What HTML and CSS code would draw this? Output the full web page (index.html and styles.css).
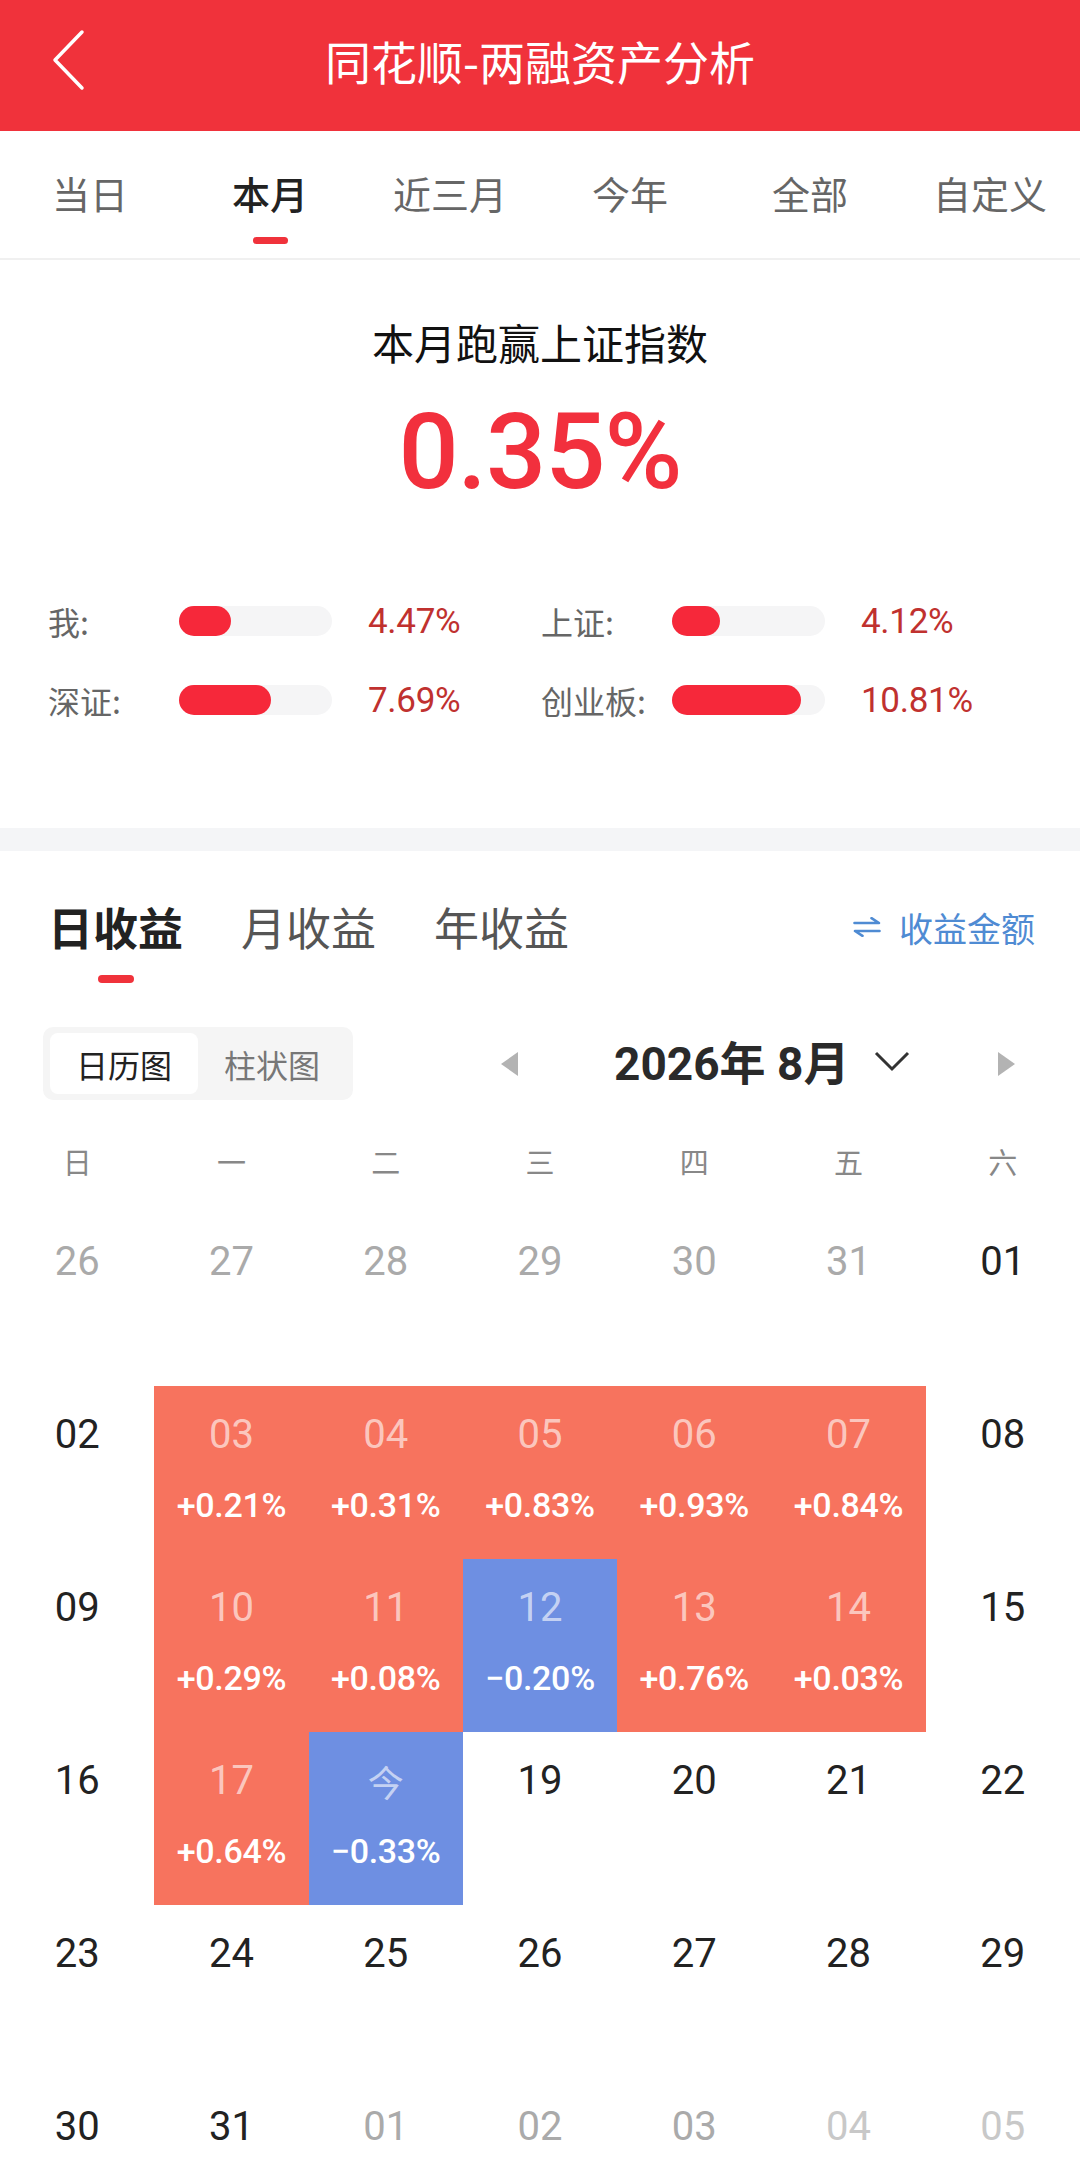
FILE: index.html
```html
<!DOCTYPE html>
<html lang="zh-CN">
<head>
<meta charset="utf-8">
<title>同花顺-两融资产分析</title>
<link rel="stylesheet" href="styles.css">
</head>
<body>
<div class="page">
  <header class="header">
    <svg class="back" width="40" height="64" viewBox="0 0 40 64"><polyline points="32,4 5,32 32,60" fill="none" stroke="#fff" stroke-width="3.5" stroke-linecap="round" stroke-linejoin="round"/></svg>
    <div class="title">同花顺-两融资产分析</div>
    <div></div>
  </header>

  <nav class="tabs">
    <div class="tab"><span>当日</span></div>
    <div class="tab active"><span>本月</span><i class="bar"></i></div>
    <div class="tab"><span>近三月</span></div>
    <div class="tab"><span>今年</span></div>
    <div class="tab"><span>全部</span></div>
    <div class="tab"><span>自定义</span></div>
  </nav>

  <section class="summary">
    <div class="sum-title">本月跑赢上证指数</div>
    <div class="sum-value">0.35%</div>
    <div class="compare">
      <div class="cmp"><span class="cmp-label">我:</span><span class="track"><span class="fill" style="width:52px"></span></span><span class="cmp-val">4.47%</span></div>
      <div class="cmp"><span class="cmp-label">上证:</span><span class="track"><span class="fill" style="width:48px"></span></span><span class="cmp-val">4.12%</span></div>
      <div class="cmp"><span class="cmp-label">深证:</span><span class="track"><span class="fill" style="width:92px"></span></span><span class="cmp-val">7.69%</span></div>
      <div class="cmp"><span class="cmp-label">创业板:</span><span class="track"><span class="fill" style="width:129px"></span></span><span class="cmp-val">10.81%</span></div>
    </div>
  </section>

  <div class="band"></div>

  <section class="profit">
    <div class="ptabs">
      <div class="ptab active"><span>日收益</span><i class="pbar"></i></div>
      <div class="ptab"><span>月收益</span></div>
      <div class="ptab"><span>年收益</span></div>
      <div class="switch">
        <svg width="28" height="20" viewBox="0 0 28 20"><path d="M1.5 6H26L18.5 1.2M26.5 14H2L9.5 18.8" fill="none" stroke="#4f8bd3" stroke-width="2.6" stroke-linecap="round" stroke-linejoin="round"/></svg>
        <span>收益金额</span>
      </div>
    </div>

    <div class="controls">
      <div class="seg">
        <div class="seg-item on">日历图</div>
        <div class="seg-item">柱状图</div>
      </div>
      <div class="monthnav">
        <svg class="tri-l" width="17" height="24" viewBox="0 0 17 24"><polygon points="17,0 0,12 17,24" fill="#b3b3b3"/></svg>
        <span class="month">2026年 8月</span>
        <svg class="down" width="36" height="22" viewBox="0 0 36 22"><polyline points="2,3 18,19 34,3" fill="none" stroke="#333" stroke-width="3"/></svg>
        <svg class="tri-r" width="17" height="24" viewBox="0 0 17 24"><polygon points="0,0 17,12 0,24" fill="#b3b3b3"/></svg>
      </div>
    </div>

    <div class="weekdays">
      <span>日</span><span>一</span><span>二</span><span>三</span><span>四</span><span>五</span><span>六</span>
    </div>

    <div class="cal">
      <div class="cell other"><b>26</b></div>
      <div class="cell other"><b>27</b></div>
      <div class="cell other"><b>28</b></div>
      <div class="cell other"><b>29</b></div>
      <div class="cell other"><b>30</b></div>
      <div class="cell other"><b>31</b></div>
      <div class="cell"><b>01</b></div>

      <div class="cell"><b>02</b></div>
      <div class="cell up"><b>03</b><em>+0.21%</em></div>
      <div class="cell up"><b>04</b><em>+0.31%</em></div>
      <div class="cell up"><b>05</b><em>+0.83%</em></div>
      <div class="cell up"><b>06</b><em>+0.93%</em></div>
      <div class="cell up"><b>07</b><em>+0.84%</em></div>
      <div class="cell"><b>08</b></div>

      <div class="cell"><b>09</b></div>
      <div class="cell up"><b>10</b><em>+0.29%</em></div>
      <div class="cell up"><b>11</b><em>+0.08%</em></div>
      <div class="cell down-c"><b>12</b><em>−0.20%</em></div>
      <div class="cell up"><b>13</b><em>+0.76%</em></div>
      <div class="cell up"><b>14</b><em>+0.03%</em></div>
      <div class="cell"><b>15</b></div>

      <div class="cell"><b>16</b></div>
      <div class="cell up"><b>17</b><em>+0.64%</em></div>
      <div class="cell down-c"><b class="cjk">今</b><em>−0.33%</em></div>
      <div class="cell"><b>19</b></div>
      <div class="cell"><b>20</b></div>
      <div class="cell"><b>21</b></div>
      <div class="cell"><b>22</b></div>

      <div class="cell"><b>23</b></div>
      <div class="cell"><b>24</b></div>
      <div class="cell"><b>25</b></div>
      <div class="cell"><b>26</b></div>
      <div class="cell"><b>27</b></div>
      <div class="cell"><b>28</b></div>
      <div class="cell"><b>29</b></div>

      <div class="cell"><b>30</b></div>
      <div class="cell"><b>31</b></div>
      <div class="cell other"><b>01</b></div>
      <div class="cell other"><b>02</b></div>
      <div class="cell other"><b>03</b></div>
      <div class="cell other faint"><b>04</b></div>
      <div class="cell other faint"><b>05</b></div>
    </div>
  </section>
</div>
</body>
</html>
```

FILE: styles.css
```css
* { box-sizing: border-box; margin: 0; padding: 0; }
html, body { background: #fff; }
body {
  width: 1080px;
  height: 2160px;
  overflow: hidden;
  font-family: Roboto, "Noto Sans CJK SC", sans-serif;
  color: #222;
}
.page { width: 1080px; }

/* header */
.header {
  height: 131px;
  background: #f0323b;
  display: grid;
  grid-template-columns: 130px 1fr 130px;
  align-items: center;
  padding-bottom: 12px;
}
.back { margin-left: 50px; display: block; }
.title {
  text-align: center;
  color: #fff;
  font-family: "Noto Sans CJK SC", sans-serif;
  font-size: 46px;
  line-height: 60px;
  font-weight: 400;
}

/* tabs */
.tabs {
  height: 129px;
  display: grid;
  grid-template-columns: repeat(6, 1fr);
  padding-top: 37px;
  border-bottom: 2px solid #f0f0f0;
}
.tab {
  display: flex;
  flex-direction: column;
  align-items: center;
}
.tab span {
  font-family: "Noto Sans CJK SC", sans-serif;
  font-size: 38px;
  line-height: 50px;
  color: #666;
}
.tab.active span { color: #222; font-weight: 500; }
.bar {
  display: block;
  width: 35px;
  height: 7px;
  border-radius: 4px;
  background: #f0323b;
  margin-top: 19px;
}

/* summary */
.summary { padding: 52px 0 103px; }
.sum-title {
  text-align: center;
  font-family: "Noto Sans CJK SC", sans-serif;
  font-size: 42px;
  line-height: 60px;
  color: #111;
}
.sum-value {
  margin-top: 20px;
  text-align: center;
  font-family: Roboto, sans-serif;
  font-weight: 500;
  font-size: 106px;
  line-height: 120px;
  color: #f2303d;
  letter-spacing: -1px;
}
.compare {
  margin-top: 84px;
  padding-left: 48px;
  display: grid;
  grid-template-columns: 493px 493px;
  row-gap: 29px;
}
.cmp {
  display: flex;
  align-items: center;
  height: 50px;
}
.cmp-label {
  width: 131px;
  font-family: "Noto Sans CJK SC", sans-serif;
  font-size: 32px;
  color: #666;
}
.track {
  width: 153px;
  height: 30px;
  border-radius: 15px;
  background: #f5f5f6;
  display: block;
}
.fill {
  display: block;
  height: 30px;
  border-radius: 15px;
  background: #f6283a;
}
.cmp-val {
  margin-left: 36px;
  font-size: 35px;
  color: #c0312f;
  letter-spacing: -0.3px;
}

.band { height: 23px; background: #f4f5f7; }

/* profit */
.profit { padding-top: 46px; }
.ptabs {
  display: flex;
  align-items: flex-start;
  padding: 0 45px 0 48px;
  gap: 58px;
}
.ptab {
  display: flex;
  flex-direction: column;
  align-items: center;
}
.ptab span {
  font-family: "Noto Sans CJK SC", sans-serif;
  font-size: 45px;
  line-height: 60px;
  color: #555;
}
.ptab.active span { color: #222; font-weight: 700; }
.pbar {
  display: block;
  width: 36px;
  height: 8px;
  border-radius: 4px;
  background: #f0323b;
  margin-top: 18px;
}
.switch {
  margin-left: auto;
  display: flex;
  align-items: center;
  gap: 18px;
  height: 60px;
  color: #4f8bd3;
  font-family: "Noto Sans CJK SC", sans-serif;
  font-size: 34px;
}

.controls {
  margin-top: 44px;
  display: flex;
  align-items: center;
  padding-left: 43px;
}
.seg {
  display: flex;
  width: 310px;
  height: 73px;
  padding: 6px 7px;
  background: #f5f5f5;
  border-radius: 10px;
}
.seg-item {
  width: 148px;
  height: 61px;
  display: flex;
  align-items: center;
  justify-content: center;
  font-family: "Noto Sans CJK SC", sans-serif;
  font-size: 32px;
  color: #777;
  border-radius: 8px;
}
.seg-item.on { background: #fff; color: #222; }
.monthnav {
  display: flex;
  align-items: center;
}
.tri-l { margin-left: 148px; display: block; }
.month {
  margin-left: 96px;
  font-size: 46px;
  font-weight: 700;
  color: #2a2a2a;
  line-height: 60px;
  width: 234px;
  white-space: nowrap;
}
.down { margin-left: 26px; display: block; margin-top: -6px; }
.tri-r { margin-left: 88px; display: block; }

.weekdays {
  margin-top: 41px;
  display: grid;
  grid-template-columns: repeat(7, 1fr);
  height: 40px;
  line-height: 40px;
  text-align: center;
  font-family: "Noto Sans CJK SC", sans-serif;
  font-size: 29px;
  color: #888;
}

.cal {
  margin-top: 32px;
  display: grid;
  grid-template-columns: repeat(7, 1fr);
  grid-auto-rows: 173px;
}
.cell {
  display: flex;
  flex-direction: column;
  align-items: center;
  padding-top: 24px;
}
.cell b {
  font-weight: 400;
  font-size: 40px;
  line-height: 50px;
  color: #222;
}
.cell b.cjk { font-family: "Noto Sans CJK SC", sans-serif; font-size: 36px; }
.cell em {
  font-style: normal;
  margin-top: 23px;
  font-size: 34px;
  line-height: 44px;
  font-weight: 500;
  color: #fff;
  letter-spacing: -0.3px;
}
.cell.other b { color: #aaa; }
.cell.faint b { color: #c8c8c8; }
.cell.up { background: #f7735e; }
.cell.down-c { background: #6e8fe2; }
.cell.up b, .cell.down-c b { color: rgba(255, 255, 255, 0.62); }
```
